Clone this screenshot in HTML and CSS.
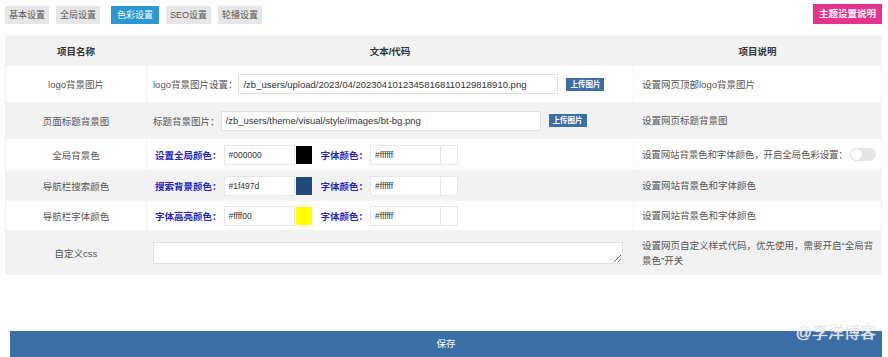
FILE: index.html
```html
<!DOCTYPE html>
<html lang="zh-CN">
    <head>
        <meta charset="UTF-8" />
        <title>色彩设置</title>
        <link rel="stylesheet" href="styles.css">
    </head>
    <body>
        <div class="top-bar">
            <div class="tabs">
                <span class="tab">基本设置</span>
                <span class="tab">全局设置</span>
                <span class="tab active">色彩设置</span>
                <span class="tab">SEO设置</span>
                <span class="tab">轮播设置</span>
            </div>
            <span class="help-btn">主题设置说明</span>
        </div>

        <table class="settings">
            <colgroup>
                <col class="col-name">
                <col class="col-value">
                <col class="col-desc">
            </colgroup>
            <tr class="head">
                <th>项目名称</th>
                <th>文本/代码</th>
                <th>项目说明</th>
            </tr>
            <tr class="row-logo">
                <td class="name">logo背景图片</td>
                <td>
                    <div class="field">
                        <span class="label">logo背景图片设置：</span>
                        <input class="path logo-path" type="text" value="/zb_users/upload/2023/04/20230410123458168110129818910.png">
                        <span class="upload">上传图片</span>
                    </div>
                </td>
                <td class="desc">设置网页顶部logo背景图片</td>
            </tr>
            <tr class="row-title gray">
                <td class="name">页面标题背景图</td>
                <td>
                    <div class="field">
                        <span class="label">标题背景图片：</span>
                        <input class="path" type="text" value="/zb_users/theme/visual/style/images/bt-bg.png">
                        <span class="upload">上传图片</span>
                    </div>
                </td>
                <td class="desc">设置网页标题背景图</td>
            </tr>
            <tr class="row-color">
                <td class="name">全局背景色</td>
                <td>
                    <div class="field">
                        <span class="blue">设置全局颜色：</span>
                        <input class="hex" type="text" value="#000000">
                        <span class="swatch" style="background: #000000"></span>
                        <span class="blue second">字体颜色：</span>
                        <input class="hex" type="text" value="#ffffff">
                        <span class="swatch empty"></span>
                    </div>
                </td>
                <td class="desc">
                    <div class="desc-line">
                        设置网站背景色和字体颜色，开启全局色彩设置：
                        <span class="toggle"><span class="knob"></span></span>
                    </div>
                </td>
            </tr>
            <tr class="row-nav gray">
                <td class="name">导航栏搜索颜色</td>
                <td>
                    <div class="field">
                        <span class="blue">搜索背景颜色：</span>
                        <input class="hex" type="text" value="#1f497d">
                        <span class="swatch" style="background: #1f497d"></span>
                        <span class="blue second">字体颜色：</span>
                        <input class="hex" type="text" value="#ffffff">
                        <span class="swatch empty"></span>
                    </div>
                </td>
                <td class="desc">设置网站背景色和字体颜色</td>
            </tr>
            <tr class="row-nav">
                <td class="name">导航栏字体颜色</td>
                <td>
                    <div class="field">
                        <span class="blue">字体高亮颜色：</span>
                        <input class="hex" type="text" value="#ffff00">
                        <span class="swatch" style="background: #ffff00"></span>
                        <span class="blue second">字体颜色：</span>
                        <input class="hex" type="text" value="#ffffff">
                        <span class="swatch empty"></span>
                    </div>
                </td>
                <td class="desc">设置网站背景色和字体颜色</td>
            </tr>
            <tr class="row-css gray">
                <td class="name">自定义css</td>
                <td><textarea class="css-box"></textarea></td>
                <td class="desc">设置网页自定义样式代码，优先使用，需要开启“全局背景色”开关</td>
            </tr>
        </table>

        <div class="save-wrap">
            <span class="watermark">@李洋博客</span>
            <div class="save-btn">保存</div>
        </div>
    </body>
</html>
```

FILE: styles.css
```css
body {
    margin: 0;
    padding: 4px 6px 0 5px;
    font-family: 'Liberation Sans', Arial, 'Noto Sans CJK SC', sans-serif;
    font-size: 9.5px;
    color: #555;
    background: #fff;
    height: 353px;
    overflow: hidden;
}

.top-bar {
    display: flex;
    justify-content: space-between;
    align-items: center;
    height: 20px;
}

.tabs {
    display: flex;
    gap: 7px;
    padding-top: 1px;
}

.tab {
    display: inline-block;
    height: 18px;
    line-height: 18px;
    padding: 0 4px;
    background-color: #e6e6e6;
    color: #555;
    font-size: 9px;
}

.tab.active {
    padding: 0 6px;
    margin-left: 4px;
    background-color: #2b98d4;
    color: #fff;
}

.help-btn {
    display: inline-block;
    height: 20px;
    line-height: 20px;
    padding: 0 6px;
    background-color: #e5338f;
    color: #fff;
    font-weight: bold;
    font-size: 9.5px;
}

.settings {
    width: 877px;
    margin-top: 11px;
    border-collapse: collapse;
    table-layout: fixed;
}

.col-name {
    width: 141px;
}

.col-desc {
    width: 248px;
}

.settings th,
.settings td {
    border: 1px solid #f3f3f3;
    padding: 0;
}

.settings th {
    height: 29px;
    background-color: #f2f2f2;
    color: #333;
    font-weight: bold;
}

.settings td {
    background-color: #fff;
}

.settings tr.gray td {
    background-color: #f2f2f2;
}

.settings td.name {
    text-align: center;
    color: #555;
}

.settings td:nth-child(2) {
    padding-left: 6px;
}

.settings td.desc {
    padding-left: 8px;
    line-height: 15px;
}

.row-logo td {
    height: 36px;
}

.row-title td {
    height: 35px;
}

.row-color td {
    height: 31px;
}

.row-nav td {
    height: 29px;
}

.row-css td {
    height: 43px;
}

.field {
    display: flex;
    align-items: center;
}

.label {
    color: #555;
}

.path {
    box-sizing: border-box;
    width: 320px;
    height: 20px;
    border: 1px solid #e2e2e2;
    padding: 0 4px;
    font-family: 'Liberation Sans', Arial, sans-serif;
    font-size: 9.5px;
    color: #333;
    background: #fff;
    margin-left: 1px;
}

.upload {
    display: inline-block;
    margin-left: 8px;
    height: 13px;
    line-height: 13px;
    padding: 0 4px;
    background-color: #3a6ea5;
    color: #fff;
    font-size: 7.5px;
    font-weight: bold;
}

.blue {
    color: #2525c4;
    font-weight: bold;
    padding-left: 2px;
}

.blue.second {
    margin-left: 7px;
}

.hex {
    box-sizing: border-box;
    width: 71px;
    height: 20px;
    border: 1px solid #e6e6e6;
    padding: 0 4px;
    font-family: 'Liberation Sans', Arial, sans-serif;
    font-size: 8.5px;
    color: #333;
    background: #fff;
    margin-left: 2px;
}

.swatch {
    display: inline-block;
    width: 16px;
    height: 18px;
    margin-left: 1px;
}

.swatch.empty {
    box-sizing: border-box;
    height: 20px;
    width: 17px;
    margin-left: 0;
    border: 1px solid #e6e6e6;
    border-left: none;
    background: #fff;
}

.desc-line {
    display: flex;
    align-items: center;
    gap: 2px;
    letter-spacing: -0.15px;
}

.toggle {
    position: relative;
    display: inline-block;
    width: 26px;
    height: 13px;
    border-radius: 7px;
    background-color: #e4e4e4;
}

.knob {
    position: absolute;
    left: 0;
    top: 0;
    box-sizing: border-box;
    width: 13px;
    height: 13px;
    border-radius: 50%;
    background: #fff;
    border: 1px solid #ddd;
}

.css-box {
    display: block;
    box-sizing: border-box;
    width: 470px;
    height: 22px;
    border: 1px solid #e2e2e2;
    background: #fff;
    resize: vertical;
}

.save-wrap {
    position: relative;
    margin-top: 56px;
    padding-left: 5px;
}

.save-btn {
    height: 26px;
    line-height: 26px;
    background-color: #3a6ea5;
    color: #fff;
    text-align: center;
    font-size: 9.5px;
    width: 872px;
}

.watermark {
    position: absolute;
    right: 6px;
    top: -12px;
    font-size: 16px;
    color: rgba(225, 225, 225, 0.85);
    z-index: 1;
    text-shadow: 0 0 1px #fff;
}
```
